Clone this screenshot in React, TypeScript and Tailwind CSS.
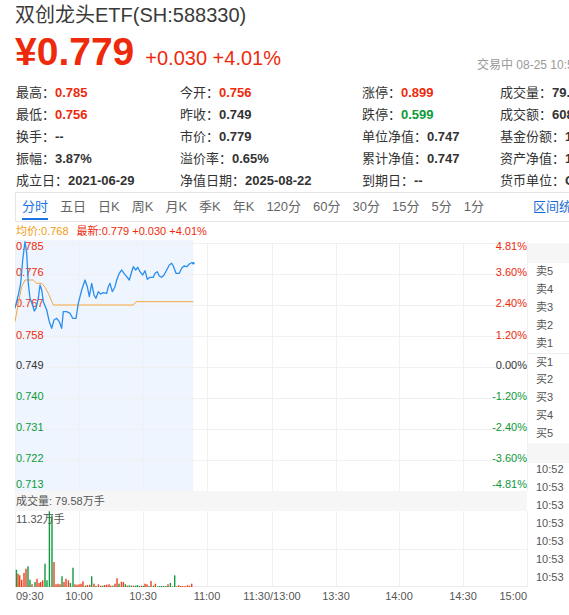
import React from 'react';

const UP = '#ee2a0c';
const DOWN = '#0c9a3c';

type Tone = 'up' | 'down' | undefined;
type Cell = { label: string; value: string; tone?: Tone };

const toneClass = (tone: Tone) =>
  tone === 'up' ? 'text-[#ee2a0c]' : tone === 'down' ? 'text-[#0c9a3c]' : 'text-[#333]';

const stats: Cell[][] = [
  [
    { label: '最高', value: '0.785', tone: 'up' },
    { label: '今开', value: '0.756', tone: 'up' },
    { label: '涨停', value: '0.899', tone: 'up' },
    { label: '成交量', value: '79.58万' },
  ],
  [
    { label: '最低', value: '0.756', tone: 'up' },
    { label: '昨收', value: '0.749' },
    { label: '跌停', value: '0.599', tone: 'down' },
    { label: '成交额', value: '6082.39万' },
  ],
  [
    { label: '换手', value: '--' },
    { label: '市价', value: '0.779' },
    { label: '单位净值', value: '0.747' },
    { label: '基金份额', value: '1.86亿' },
  ],
  [
    { label: '振幅', value: '3.87%' },
    { label: '溢价率', value: '0.65%' },
    { label: '累计净值', value: '0.747' },
    { label: '资产净值', value: '1.39亿' },
  ],
  [
    { label: '成立日', value: '2021-06-29' },
    { label: '净值日期', value: '2025-08-22' },
    { label: '到期日', value: '--' },
    { label: '货币单位', value: 'CNY' },
  ],
];

const tabs = ['分时', '五日', '日K', '周K', '月K', '季K', '年K', '120分', '60分', '30分', '15分', '5分', '1分'];

// price line, svg coords (x from 9:30, y from chart top)
const priceLine =
  '0,68.3 3.3,55 5.7,43.3 7.7,20 10,1.7 11.7,13.3 13.3,43.3 15,58.3 17.7,65 19.3,71 21,68.3 23.3,58.3 25,45 26.7,50 28.3,61.7 31.7,70 34.3,81.7 36.7,88.3 39,80 41.7,78.3 44.3,81.7 46.7,88.3 48.3,71.7 51.7,71.7 55,73.3 57.7,78.3 61,78.3 63.3,63.3 66.7,50 70,40 72.3,46.7 74.3,56.7 76.7,43.3 79,55 81,58.3 83.3,51.7 85.7,54 88.3,52.7 91.7,53.3 93.3,46.7 95,43.3 97.3,51.7 100,46.7 101.7,40 104.3,33.3 106.7,30 109,33.3 111.7,36.7 114.3,40 116.7,31.7 118.3,26.7 120.7,30 122.7,27.3 125,31.7 127.7,35 130,30.7 132.3,39.3 135,37.3 138.3,37.3 140,33.3 142.3,31.7 144.3,36 146.7,37.3 149,35 151.7,30 154.3,25 156.7,23.3 158.3,26 161,33.3 164.3,33.3 166.7,28.3 169,26 171.7,26.7 174.3,24 176.7,22.7 178.3,23.3';

const avgLine =
  '0,81.7 3.3,63.3 6.7,46.7 10,40 18.3,40 21.7,43.3 26.7,43.3 30,47.3 33.3,53.3 38.3,65 118.3,65 121,61.7 178.3,61.7';

const leftAxis: [string, number, string][] = [
  ['0.785', 7, UP],
  ['0.776', 33, UP],
  ['0.767', 64, UP],
  ['0.758', 96, UP],
  ['0.749', 126, '#333'],
  ['0.740', 157, DOWN],
  ['0.731', 188, DOWN],
  ['0.722', 219, DOWN],
  ['0.713', 245, DOWN],
];

const rightAxis: [string, number, string][] = [
  ['4.81%', 7, UP],
  ['3.60%', 33, UP],
  ['2.40%', 64, UP],
  ['1.20%', 96, UP],
  ['0.00%', 126, '#333'],
  ['-1.20%', 157, DOWN],
  ['-2.40%', 188, DOWN],
  ['-3.60%', 219, DOWN],
  ['-4.81%', 245, DOWN],
];

// [x, height, up?]
const volumes: [number, number, number][] = [
  [0.7, 17.3, 0], [2.3, 13.3, 1], [4, 11.7, 1], [6, 7.3, 1], [8.3, 14, 1], [10.3, 18.3, 1],
  [12.3, 20.7, 0], [14.3, 7.3, 0], [16.3, 2.7, 1], [19.3, 5, 0], [21.3, 8.3, 1], [23.3, 4, 1],
  [25, 5, 1], [27, 6.7, 1], [29.3, 23.3, 0], [31.3, 6.7, 0], [33.7, 75.7, 0], [36.3, 71.7, 0],
  [38.3, 25, 1], [40.3, 2.7, 1], [42.3, 3.3, 1], [44.3, 2.7, 1], [46.3, 10.7, 0], [48.3, 5, 1],
  [50.3, 8.3, 1], [52.7, 6.7, 1], [54.7, 4, 0], [57.3, 19.3, 0], [59.3, 2.7, 1], [61.3, 2.3, 1],
  [63.3, 2.7, 1], [65.3, 3.3, 1], [67.3, 5.7, 1], [69.7, 1.3, 0], [71.7, 2, 1], [74, 2.3, 1],
  [76, 10.7, 0], [78.3, 3.3, 1], [80.3, 1, 0], [82.7, 2.7, 1], [85, 1.3, 1], [87, 1.3, 0],
  [89, 2, 1], [91, 2.3, 1], [93.3, 2.7, 1], [95, 1.3, 1], [97.3, 1.3, 0], [99.3, 3.3, 1],
  [101.3, 8.7, 1], [103.3, 3.3, 0], [105.7, 5.3, 1], [107.7, 5, 1], [109.7, 2.7, 0], [111.7, 1.3, 1],
  [113.7, 1.7, 0], [115.7, 1.3, 0], [117.7, 1.3, 1], [119.7, 1.3, 0], [121.7, 2, 0], [123.7, 1, 0],
  [125.7, 1.3, 1], [127.7, 1, 0], [129.3, 3.3, 1], [131.3, 2.7, 1], [133.3, 1, 0], [135.3, 6, 1],
  [137.7, 1.3, 0], [139.7, 3.3, 1], [142, 0.7, 0], [144, 1, 0], [146, 1, 0], [148, 1, 0],
  [150.3, 1, 0], [152.3, 2.7, 1], [154.7, 4, 0], [157, 0.7, 0], [159, 11.7, 0], [161, 0.7, 1],
  [163, 1.7, 1], [165, 1, 1], [167, 1, 1], [169.3, 1, 1], [171.7, 1.7, 1], [173.7, 1.3, 1],
  [176, 3.3, 1],
];

const times: [string, number, 'start' | 'middle' | 'end'][] = [
  ['09:30', 1, 'start'],
  ['10:00', 64, 'middle'],
  ['10:30', 128, 'middle'],
  ['11:00', 192, 'middle'],
  ['11:30/13:00', 257, 'middle'],
  ['13:30', 321, 'middle'],
  ['14:00', 384, 'middle'],
  ['14:30', 448, 'middle'],
  ['15:00', 512, 'end'],
];

const svgFont = { fontFamily: "'Liberation Sans', 'Noto Sans CJK SC', sans-serif" };
const vLines = [0, 64, 128, 192, 257, 321, 384, 448, 512];

function PriceChart() {
  return (
    <svg width={513} height={251} viewBox="0 0 513 251" className="block" style={svgFont}>
      <rect x={0} y={0} width={178.3} height={251} fill="#eef5fe" />
      {[0, 1, 2, 3, 4, 5, 6, 7, 8].map((i) => (
        <line key={i} x1={0} x2={512} y1={3.5 + 31 * i} y2={3.5 + 31 * i} stroke="#f0f0f0" />
      ))}
      {vLines.map((x) => (
        <line key={x} x1={x + 0.5} x2={x + 0.5} y1={3} y2={251} stroke="#f0f0f0" />
      ))}
      {leftAxis.map(([t, y, c]) => (
        <text key={t} x={1} y={y} fill={c} fontSize={11} dominantBaseline="middle">
          {t}
        </text>
      ))}
      {rightAxis.map(([t, y, c]) => (
        <text key={t} x={512} y={y} fill={c} fontSize={11} textAnchor="end" dominantBaseline="middle">
          {t}
        </text>
      ))}
      <polyline points={avgLine} fill="none" stroke="#f6a53c" strokeWidth={1} />
      <polyline points={priceLine} fill="none" stroke="#2a8ef0" strokeWidth={1.3} strokeLinejoin="round" />
      <circle cx={178.3} cy={23.3} r={1.3} fill="#2a8ef0" />
    </svg>
  );
}

function VolumeChart() {
  return (
    <svg width={513} height={76} viewBox="0 0 513 76" className="block" style={svgFont}>
      <line x1={0} x2={512} y1={38.5} y2={38.5} stroke="#f0f0f0" />
      <line x1={0} x2={512} y1={75.5} y2={75.5} stroke="#ececec" />
      {vLines.map((x) => (
        <line key={x} x1={x + 0.5} x2={x + 0.5} y1={0} y2={76} stroke="#f0f0f0" />
      ))}
      {volumes.map(([x, h, up], i) => (
        <rect key={i} x={x} y={76 - h} width={1.4} height={h} fill={up ? '#e8421e' : '#109c40'} />
      ))}
      <text x={1} y={9} fontSize={11} fill="#555" dominantBaseline="middle">
        11.32万手
      </text>
    </svg>
  );
}

function TimeAxis() {
  return (
    <svg width={513} height={20} viewBox="0 0 513 20" className="block" style={svgFont}>
      {times.map(([t, x, a]) => (
        <text key={t} x={x} y={10} fontSize={11} fill="#555" textAnchor={a} dominantBaseline="middle">
          {t}
        </text>
      ))}
    </svg>
  );
}

function OrderBook() {
  const sells = ['卖5', '卖4', '卖3', '卖2', '卖1'];
  const buys = ['买1', '买2', '买3', '买4', '买5'];
  const trades = ['10:52', '10:53', '10:53', '10:53', '10:53', '10:53', '10:53'];
  return (
    <div className="w-[41px] mt-[3px] text-[11px] text-[#555] whitespace-nowrap">
      <div className="h-[20px] bg-[#f6f6f6]" />
      {sells.map((s) => (
        <div key={s} className="h-[18px] pt-[2px] pl-[8px] leading-[12px]">{s}</div>
      ))}
      {buys.map((s, i) => (
        <div key={s} className={`h-[18px] pt-[2px] pl-[8px] leading-[12px] ${i === 0 ? 'border-t border-[#eeeeee]' : ''}`}>
          {s}
        </div>
      ))}
      <div className="h-[20px] bg-[#f6f6f6]" />
      {trades.map((t, i) => (
        <div key={i} className="h-[18px] pl-[8px] leading-[12px]">{t}</div>
      ))}
    </div>
  );
}

export default function App() {
  return (
    <div className="w-[569px] h-[615px] overflow-hidden bg-white font-['Liberation_Sans','Noto_Sans_CJK_SC',sans-serif]">
      <div className="pl-[15px] pt-[2px] text-[20px] leading-[26px] text-[#3a3a3a] whitespace-nowrap">
        双创龙头ETF(SH:588330)
      </div>

      <div className="flex items-baseline pl-[15px] mt-[2px] h-[44px] whitespace-nowrap">
        <span className="text-[39px] leading-[44px] font-bold text-[#ee2a0c]">¥0.779</span>
        <span className="ml-[11px] text-[20px] text-[#ee2a0c]">+0.030 +4.01%</span>
        <span className="ml-[196px] self-end mb-[2px] text-[12px] leading-[14px] text-[#999]">交易中 08-25 10:53:14</span>
      </div>

      <div className="mt-[8px] pl-[16px] grid grid-cols-[164px_182px_138px_200px] text-[13px] whitespace-nowrap">
        {stats.flat().map((c) => (
          <div key={c.label} className="h-[22px] leading-[22px] text-[#333]">
            {c.label}：<span className={`font-bold ${toneClass(c.tone)}`}>{c.value}</span>
          </div>
        ))}
      </div>

      <div className="ml-[15px] h-[30px] border-t border-l border-b border-[#e6e6e6] flex gap-[12px] pl-[6px] text-[13px] text-[#666] whitespace-nowrap">
        {tabs.map((t, i) => (
          <div key={t} className={`relative h-full leading-[28px] ${i === 0 ? 'text-[#1a73e0]' : ''}`}>
            {t}
            {i === 0 && <div className="absolute left-0 right-0 bottom-[1px] h-[2px] bg-[#1a73e0]" />}
          </div>
        ))}
        <div className="ml-[37px] leading-[28px] text-[#1a6ad6]">区间统计</div>
      </div>

      <div className="h-[18px] pl-[16px] flex gap-[8px] text-[11px] leading-[18px] whitespace-nowrap">
        <span className="text-[#f39a12]">均价:0.768</span>
        <span className="text-[#ee2a0c]">最新:0.779 +0.030 +4.01%</span>
      </div>

      <div className="flex pl-[15px]">
        <div className="w-[513px]">
          <PriceChart />
          <div className="h-[20px] bg-[#f6f6f6] pl-[1px] text-[11px] leading-[20px] text-[#555] w-[512px]">
            成交量: 79.58万手
          </div>
          <VolumeChart />
          <TimeAxis />
        </div>
        <OrderBook />
      </div>
    </div>
  );
}
